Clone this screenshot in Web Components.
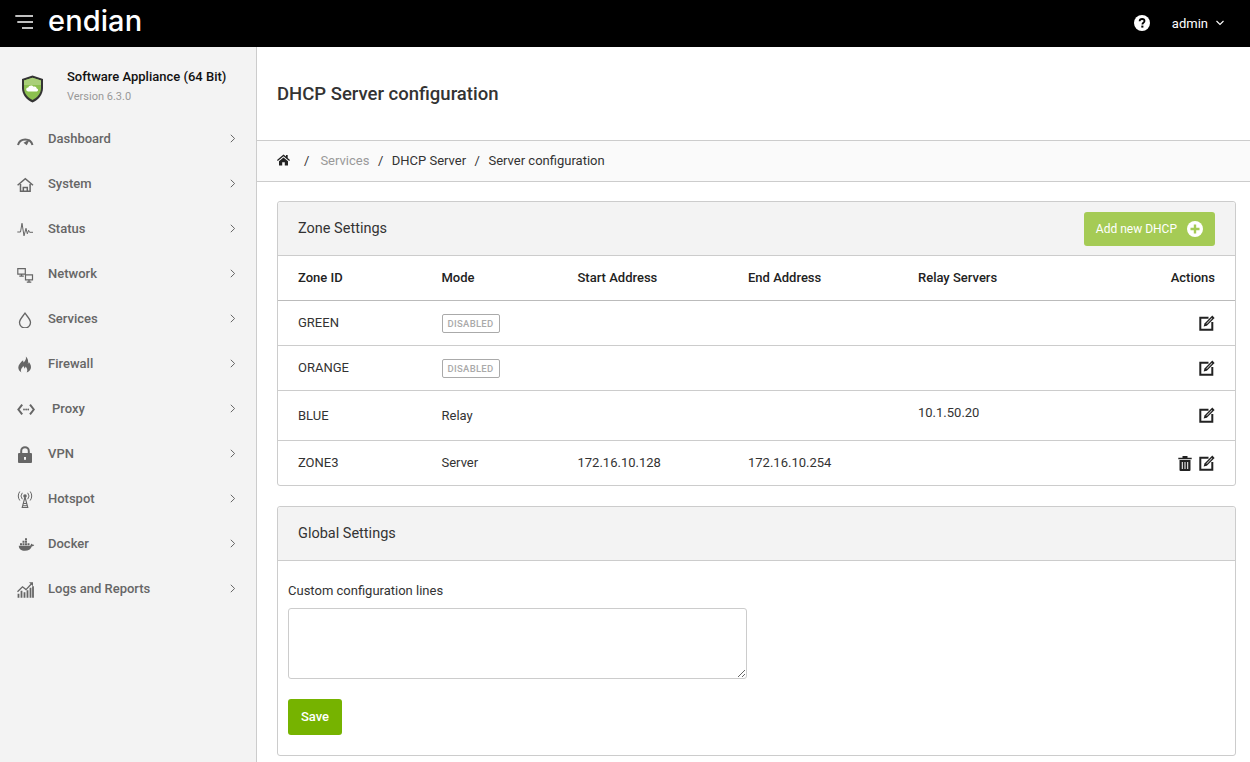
<!DOCTYPE html>
<html>
<head>
<meta charset="utf-8">
<title>DHCP Server configuration</title>
<style>
  html, body { margin: 0; height: 100%; overflow: hidden; }
  body { font-family: Roboto, "Liberation Sans", sans-serif; font-size: 13px; color: #333; background: #fff; }
  app-shell { height: 762px; }
</style>
</head>
<body>
<app-shell>
  <top-bar slot="top"></top-bar>
  <side-bar slot="side">
    <nav-item label="Dashboard" icon="gauge"></nav-item>
    <nav-item label="System" icon="house"></nav-item>
    <nav-item label="Status" icon="pulse"></nav-item>
    <nav-item label="Network" icon="network"></nav-item>
    <nav-item label="Services" icon="drop"></nav-item>
    <nav-item label="Firewall" icon="fire"></nav-item>
    <nav-item label="Proxy" icon="proxy" wide></nav-item>
    <nav-item label="VPN" icon="lock"></nav-item>
    <nav-item label="Hotspot" icon="tower"></nav-item>
    <nav-item label="Docker" icon="docker"></nav-item>
    <nav-item label="Logs and Reports" icon="chart"></nav-item>
  </side-bar>
  <page-title>DHCP Server configuration</page-title>
  <bread-crumb></bread-crumb>
  <div style="padding:19px 14px 0 20px;display:flex;flex-direction:column;gap:20px">
    <ui-panel heading="Zone Settings">
      <add-button slot="action">Add new DHCP</add-button>
      <zone-table></zone-table>
    </ui-panel>
    <ui-panel heading="Global Settings">
      <config-form></config-form>
    </ui-panel>
  </div>
</app-shell>

<script>
const ICONS = {
  gauge: '<path d="M1 15a7.500 7.500 0 0 1 14.500 0" fill="none" stroke="currentColor" stroke-width="2"/><path d="M6.500 12.800 12.800 9.300 9.800 15.200Z" fill="currentColor"/>',
  house: '<path d="M.6 10.300 8.300 3.700l7.700 6.600" fill="none" stroke="currentColor" stroke-width="1.500"/><path d="M3.500 9v7.300h9.600V9M6.300 16v-3.400h4V16" fill="none" stroke="currentColor" stroke-width="1.500"/>',
  pulse: '<path d="M.3 12h3.200L5 3.300l2 12.500 2-7.500 1.300 5.500 1.300-3.500 1 2H16" fill="none" stroke="currentColor" stroke-width="1"/>',
  network: '<path d="M.8 3.600h7.500v5.500H.8zM8.500 9.800h7v5h-7z" fill="none" stroke="currentColor" stroke-width="1.200"/><path d="M4.500 9.100v1.800M2.300 11.200h4.500M12 14.800v1.600M9.800 17.200h4.500" fill="none" stroke="currentColor" stroke-width="1.300"/>',
  drop: '<path d="M8 3.200C6 6.200 2.500 9.400 2.500 12.500a5.500 5.500 0 0 0 11 0C13.500 9.400 10 6.200 8 3.200Z" fill="none" stroke="currentColor" stroke-width="1.300"/>',
  fire: '<path transform="translate(-.7 .6)" d="M9.600 1c.6 3-1 4.400-2.200 5.800C6.900 6 6.800 5.200 6.800 4.600 4.400 6.500 2 9.300 2 12c0 2.200 1.300 3.900 3.300 5-.6-1.100-.9-2-.5-3.200.4-1.200 1.500-2 2.100-3.300.9 1 1.100 1.700 1.100 2.400.8-.4 1.200-1.200 1.200-2 1.500 1.400 2.500 3.700 1.200 6.100 2.300-.9 4.300-2.700 4.300-5.400 0-2.300-1.200-4-2.200-5.200-.1.800-.4 1.500-1 2C12.300 6 11.800 3 9.600 1Z" fill="currentColor"/>',
  proxy: '<path d="M5.200 4.700 1.400 9.500l3.800 4.800M13 4.700l3.800 4.800-3.800 4.800" fill="none" stroke="currentColor" stroke-width="2"/><path d="M7 9.500h.01M9.100 9.500h.01M11.200 9.500h.01" stroke="currentColor" stroke-width="1.800" stroke-linecap="round"/>',
  lock: '<path d="M4.200 9V6a3.800 3.800 0 0 1 7.600 0v3" fill="none" stroke="currentColor" stroke-width="2"/><rect x="1" y="8" width="14" height="10" rx="1" fill="currentColor"/><rect x="7" y="12" width="2" height="2.800" fill="#f3f3f3"/>',
  tower: '<g transform="translate(-1 1)"><circle cx="9" cy="5" r="1.800" fill="currentColor"/><path d="M9 6 6.200 16.500h5.600L9 6ZM7.200 12.500h3.600M6.600 14.800h4.800" fill="none" stroke="currentColor" stroke-width="1.100"/><path d="M6.300 1.800a5 5 0 0 0 0 6.400M11.700 1.800a5 5 0 0 1 0 6.400M3.800.5a8 8 0 0 0 0 9M14.200.5a8 8 0 0 1 0 9" fill="none" stroke="currentColor" stroke-width="1"/></g>',
  docker: '<g transform="translate(0 1.200)"><path d="M.8 9.500h12.200c.5-.1 1-.7 1-1.600.5-.5 1-.2 1.300.4.700-.2 1.400 0 1.900.4-.6 1-1.400 1.300-2.300 1.300-1 3-3.600 4.500-7 4.500-3.800 0-6-1.700-6.100-5Z" fill="currentColor"/><path d="M3 7h2v2H3zM5.500 7h2v2h-2zM8 7h2v2H8zM5.500 4.500h2v2h-2zM8 4.500h2v2H8zM8 2h2v2H8zM10.500 7h2v2h-2z" fill="currentColor"/></g>',
  chart: '<g transform="translate(-.5 .3)"><path d="M1 11.500 6 6.500l3.500 2.800L15.500 3" fill="none" stroke="currentColor" stroke-width="1.300"/><path d="M12.500 2h4v4z" fill="currentColor"/><path d="M2 13.500v4M5 10.500v7M8 12v5.500M11 10v7.500M14 7.500v10M16.500 6v11.500" fill="none" stroke="currentColor" stroke-width="1.800"/></g>'
};

class AppShell extends HTMLElement {
  constructor() {
    super();
    this.attachShadow({ mode: 'open' }).innerHTML = `
      <style>
        :host { display: grid; grid-template-columns: 257px 1fr; grid-template-rows: 47px 1fr; }
        .top { grid-column: 1 / 3; }
        main { min-width: 0; }
      </style>
      <div class="top"><slot name="top"></slot></div>
      <slot name="side"></slot>
      <main><slot></slot></main>`;
  }
}

class TopBar extends HTMLElement {
  constructor() {
    super();
    this.attachShadow({ mode: 'open' }).innerHTML = `
      <style>
        :host { display: flex; align-items: center; height: 47px; background: #000; color: #fff; padding: 0 26px 0 15px; }
        .burger { width: 18px; height: 14px; margin: 0 15px 3px 0; }
        .logo { font: 500 29px/42px Inter, sans-serif; letter-spacing: .1px; align-self: flex-start; }
        .right { margin-left: auto; display: flex; align-items: center; margin-bottom: 1px; }
        .help { width: 16px; height: 16px; margin-right: 22px; }
        .user { font-size: 13px; margin-right: 8px; }
      </style>
      <svg class="burger" viewBox="0 0 18 14"><path d="M.3 1h17.700M2.300 7h15.700M7 13h11" stroke="#fff" stroke-width="1.700" fill="none"/></svg>
      <span class="logo">endian</span>
      <div class="right">
        <svg class="help" viewBox="0 0 16 16"><circle cx="8" cy="8" r="8" fill="#fff"/><path d="M5.600 6.200C5.700 4.800 6.700 4 8.100 4c1.400 0 2.400.8 2.400 2 0 1.900-2.100 1.700-2.100 3.400" fill="none" stroke="#000" stroke-width="1.800"/><rect x="7.300" y="10.600" width="2.100" height="2" fill="#000"/></svg>
        <span class="user">admin</span>
        <svg width="8" height="6" viewBox="0 0 8 6"><path d="M.5 1 4 4.500 7.500 1" fill="none" stroke="#fff" stroke-width="1.100"/></svg>
      </div>`;
  }
}

class SideBar extends HTMLElement {
  constructor() {
    super();
    this.attachShadow({ mode: 'open' }).innerHTML = `
      <style>
        :host { display: block; background: #f3f3f3; border-right: 1px solid #ccc; }
        .brand { display: flex; box-sizing: border-box; height: 69px; padding: 10px 0 0 21px; align-items: center; }
        .brand svg { width: 23px; height: 28px; margin: 4px 23px 0 0; flex: none; }
        .name { font-weight: 500; font-size: 13px; color: #111; line-height: 16px; }
        .ver { font-size: 11px; color: #999; line-height: 16px; margin-top: 4px; }
        nav { display: flex; flex-direction: column; }
      </style>
      <div class="brand">
        <svg viewBox="0 0 23 28">
          <path d="M11.500.5 22 4v9c0 7-5 12-10.500 14.500C6 25 1 20 1 13V4Z" fill="#333"/>
          <path d="M11.500 2.800 20 5.600V13c0 5.700-4 9.800-8.500 12C7 22.800 3 18.700 3 13V5.600Z" fill="#8cc04f"/>
          <path d="M11.500 2.800 20 5.600V10H3V5.600Z" fill="#a9cf78"/>
          <path d="M7 16.500a2 2 0 0 1 .3-4c.5-2 3.800-2.800 5.200-.8 1.600-.6 3 .3 3.200 1.700a1.600 1.600 0 0 1 .3 3.100Z" fill="#fff"/>
        </svg>
        <div><div class="name">Software Appliance (64 Bit)</div><div class="ver">Version 6.3.0</div></div>
      </div>
      <nav><slot></slot></nav>`;
  }
}

class NavItem extends HTMLElement {
  connectedCallback() {
    const icon = ICONS[this.getAttribute('icon')] || '';
    const wide = this.hasAttribute('wide');
    this.attachShadow({ mode: 'open' }).innerHTML = `
      <style>
        :host { display: flex; align-items: center; height: 45px; padding: 0 20px 0 17px; color: #666; box-sizing: border-box; }
        svg.ic { width: 18px; height: 18px; flex: none; }
        .label { margin-left: ${wide ? 17 : 13}px; font-weight: 500; font-size: 13px; flex: 1; }
        svg.ch { flex: none; }
      </style>
      <svg class="ic" viewBox="0 0 18 18">${icon}</svg>
      <span class="label">${this.getAttribute('label')}</span>
      <svg class="ch" width="6" height="9" viewBox="0 0 6 9"><path d="M.8 .8 4.600 4.500 .8 8.200" fill="none" stroke="#666" stroke-width="1"/></svg>`;
  }
}

class PageTitle extends HTMLElement {
  constructor() {
    super();
    this.attachShadow({ mode: 'open' }).innerHTML = `
      <style>
        :host { display: flex; align-items: center; height: 93px; padding-left: 20px; font-size: 18.500px; font-weight: 500; color: #333; border-bottom: 1px solid #ccc; }
      </style><slot></slot>`;
  }
}

class BreadCrumb extends HTMLElement {
  constructor() {
    super();
    this.attachShadow({ mode: 'open' }).innerHTML = `
      <style>
        :host { display: flex; align-items: center; box-sizing: content-box; height: 38px; padding: 0 0 2px 20px; background: #fafafa; border-bottom: 1px solid #ccc; font-size: 13px; color: #333; }
        svg { width: 13px; height: 12px; }
        .s { margin: 0 8.500px; }
        .first { margin: 0 11px 0 14px; }
        .muted { color: #999; }
      </style>
      <svg viewBox="0 0 13 12"><path d="M6.500 .5 0 6l.8 1L6.500 2.300 12.200 7l.8-1-2.300-2V1H9v1.600Z" fill="#222"/><path d="M2 7.200 6.500 3.500 11 7.200V11.500H7.800V8.200H5.200v3.300H2Z" fill="#222"/></svg>
      <span class="first">/</span><span class="muted">Services</span><span class="s">/</span><span>DHCP Server</span><span class="s">/</span><span>Server configuration</span>`;
  }
}

class UiPanel extends HTMLElement {
  connectedCallback() {
    this.attachShadow({ mode: 'open' }).innerHTML = `
      <style>
        :host { display: block; border: 1px solid #ccc; border-radius: 3px; background: #fff; }
        header { display: flex; align-items: center; justify-content: space-between; height: 53px; padding: 0 20px; background: #f3f3f3; border-bottom: 1px solid #ccc; border-radius: 3px 3px 0 0; font-size: 14.500px; color: #333; }
      </style>
      <header><span>${this.getAttribute('heading')}</span><slot name="action"></slot></header>
      <slot></slot>`;
  }
}

class AddButton extends HTMLElement {
  constructor() {
    super();
    this.attachShadow({ mode: 'open' }).innerHTML = `
      <style>
        :host { display: flex; align-items: center; height: 34px; padding: 0 12px; background: #a5cb55; color: #fff; border-radius: 3px; font-size: 12px; }
        svg { width: 16px; height: 16px; margin-left: 10px; }
      </style>
      <slot></slot>
      <svg viewBox="0 0 16 16"><circle cx="8" cy="8" r="8" fill="#fff"/><path d="M8 3.500v9M3.500 8h9" stroke="#a5cb55" stroke-width="2.400"/></svg>`;
  }
}

const ZONES = [
  { id: 'GREEN', disabled: true },
  { id: 'ORANGE', disabled: true },
  { id: 'BLUE', mode: 'Relay', relay: '10.1.50.20', tall: true },
  { id: 'ZONE3', mode: 'Server', start: '172.16.10.128', end: '172.16.10.254', del: true }
];

class ZoneTable extends HTMLElement {
  constructor() {
    super();
    const edit = `<svg class="act" viewBox="0 0 16 16" width="16" height="16"><path d="M9.500 2.800H1.300v12h12V7" fill="none" stroke="#222" stroke-width="2"/><path d="M13.300.6 15.600 2.900 7.800 10.700 4.700 11.500 5.500 8.400Z" fill="#222"/><path d="M12.700 3l.6.600-5.400 5.400-.6-.6Z" fill="#ddd"/></svg>`;
    const trash = `<svg class="act" viewBox="0 0 14 16" width="14" height="16"><path d="M.3 2.800h13.400v1.500H.3zM4.500 1h5v2h-5z" fill="#222"/><path d="M1.500 5h11V15a1 1 0 0 1-1 1h-9a1 1 0 0 1-1-1Z" fill="#222"/><path d="M4.300 7v7M7 7v7M9.700 7v7" stroke="#fff" stroke-width="1"/></svg>`;
    const rows = ZONES.map(z => `
      <tr class="${z.tall ? 'tall' : ''}">
        <td>${z.id}</td>
        <td class="${z.disabled ? 'dis' : ''}">${z.disabled ? '<span class="badge">DISABLED</span>' : z.mode}</td>
        <td>${z.start || ''}</td>
        <td>${z.end || ''}</td>
        <td class="${z.tall ? 'up' : ''}">${z.relay || ''}</td>
        <td class="r"><span class="acts">${z.del ? trash : ''}${edit}</span></td>
      </tr>`).join('');
    this.attachShadow({ mode: 'open' }).innerHTML = `
      <style>
        :host { display: block; }
        table { width: 100%; border-collapse: collapse; table-layout: fixed; font-size: 13px; color: #333; }
        th { height: 44px; padding: 0 0 0 20px; text-align: left; font-weight: 500; color: #222; border-bottom: 1px solid #bbb; box-sizing: border-box; }
        td { height: 45px; padding: 0 0 0 20px; border-top: 1px solid #ccc; box-sizing: border-box; }
        tr:first-child td { border-top: 0; }
        tr.tall td { height: 50px; }
        td.up { padding-bottom: 6px; }
        td.dis { padding-top: 2px; }
        .r, th.r { text-align: right; padding: 0 20px 0 0; }
        .badge { display: inline-block; font-size: 9.500px; font-weight: 500; color: #aaa; border: 1px solid #aaa; border-radius: 2px; padding: 0 5px; line-height: 17px; letter-spacing: .3px; }
        .acts { display: inline-flex; gap: 7px; align-items: center; vertical-align: middle; }
        .act { display: block; }
      </style>
      <table>
        <colgroup><col style="width:143.500px"><col style="width:136px"><col style="width:170.500px"><col style="width:170px"><col style="width:170px"><col></colgroup>
        <thead><tr><th>Zone ID</th><th>Mode</th><th>Start Address</th><th>End Address</th><th>Relay Servers</th><th class="r">Actions</th></tr></thead>
        <tbody>${rows}</tbody>
      </table>`;
  }
}

class ConfigForm extends HTMLElement {
  constructor() {
    super();
    this.attachShadow({ mode: 'open' }).innerHTML = `
      <style>
        :host { display: block; padding: 22px 10px 20px; }
        label { display: block; font-size: 13px; color: #333; line-height: 16px; margin-bottom: 9px; }
        textarea { display: block; width: 459px; height: 71px; box-sizing: border-box; border: 1px solid #ccc; border-radius: 3px; margin: 0 0 20px; background: #fff; }
        button { display: block; width: 54px; height: 36px; border: 0; border-radius: 3px; background: #76b300; color: #fff; font: 500 13px Roboto, sans-serif; padding: 0 0 2px; }
      </style>
      <label>Custom configuration lines</label>
      <textarea></textarea>
      <button>Save</button>`;
  }
}

customElements.define('app-shell', AppShell);
customElements.define('top-bar', TopBar);
customElements.define('side-bar', SideBar);
customElements.define('nav-item', NavItem);
customElements.define('page-title', PageTitle);
customElements.define('bread-crumb', BreadCrumb);
customElements.define('ui-panel', UiPanel);
customElements.define('add-button', AddButton);
customElements.define('zone-table', ZoneTable);
customElements.define('config-form', ConfigForm);
</script>
</body>
</html>
